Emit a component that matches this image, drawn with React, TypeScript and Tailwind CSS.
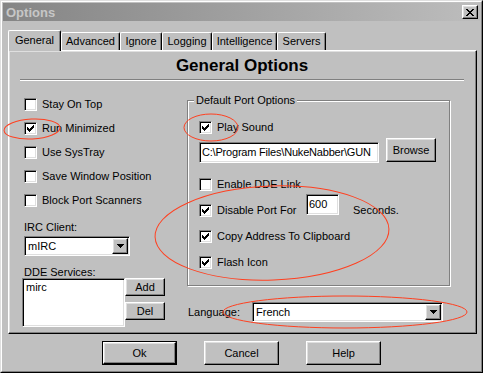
import React from "react"

const raised =
  "border border-t-white border-l-white border-r-black border-b-black shadow-[inset_-1px_-1px_0_#808080,inset_1px_1px_0_#dfdfdf] bg-[#c0c0c0]"
const sunken =
  "border border-t-[#808080] border-l-[#808080] border-r-white border-b-white shadow-[inset_1px_1px_0_#000,inset_-1px_-1px_0_#dfdfdf]"

function CheckMark() {
  return (
    <svg width="7" height="7" viewBox="0 0 7 7" className="block m-[2px]" shapeRendering="crispEdges">
      <path
        fill="#000"
        d="M6 0h1v1h-1zM5 1h2v1h-2zM0 2h1v1h-1zM4 2h3v1h-3zM0 3h2v1h-2zM3 3h3v1h-3zM0 4h5v1h-5zM1 5h3v1h-3zM2 6h1v1h-1z"
      />
    </svg>
  )
}

function Box({ checked }: { checked?: boolean }) {
  return <span className={`${sunken} block w-[13px] h-[13px] bg-white shrink-0`}>{checked && <CheckMark />}</span>
}

function CheckRow({ label, checked, h = "h-[24px]" }: { label: string; checked?: boolean; h?: string }) {
  return (
    <div className={`flex items-center gap-[5px] ${h}`}>
      <Box checked={checked} />
      <span>{label}</span>
    </div>
  )
}

function ArrowButton() {
  return (
    <span className={`${raised} mr-[1px] flex items-center justify-center w-[16px] h-[16px] shrink-0`}>
      <svg width="7" height="4" viewBox="0 0 7 4" shapeRendering="crispEdges">
        <path fill="#000" d="M0 0h7v1h-7zM1 1h5v1h-5zM2 2h3v1h-3zM3 3h1v1h-1z" />
      </svg>
    </span>
  )
}

function Combo({ value, w }: { value: string; w: string }) {
  return (
    <div className={`${sunken} bg-white flex items-center h-[20px] ${w}`}>
      <span className="flex-1 pl-[3px] whitespace-nowrap overflow-hidden">{value}</span>
      <ArrowButton />
    </div>
  )
}

function Tab({ label, w, active }: { label: string; w: string; active?: boolean }) {
  if (active) {
    return (
      <div
        className={`${w} h-[21px] -mb-px relative z-10 bg-[#c0c0c0] border-t border-l border-r border-t-white border-l-white border-r-black shadow-[inset_-1px_0_0_#808080] rounded-t-[2px] flex justify-center pt-[3px]`}
      >
        {label}
      </div>
    )
  }
  return (
    <div
      className={`${w} h-[18px] border-t border-l border-r border-t-white border-l-white border-r-black shadow-[inset_-1px_0_0_#808080] rounded-t-[2px] flex justify-center pt-[2px]`}
    >
      {label}
    </div>
  )
}

function Button({ label, def }: { label: string; def?: boolean }) {
  if (def) {
    return (
      <div className="border border-black w-[75px] h-[24px]">
        <div className={`${raised} w-full h-full flex items-center justify-center`}>{label}</div>
      </div>
    )
  }
  return <div className={`${raised} w-[75px] h-[24px] flex items-center justify-center`}>{label}</div>
}

export default function App() {
  return (
    <div className="relative w-[483px] h-[373px] overflow-hidden bg-[#c0c0c0] text-black font-['Liberation_Sans',Arial,sans-serif] text-[11px] leading-[13px]">
      <div className="w-full h-full border border-t-[#dfdfdf] border-l-[#dfdfdf] border-r-black border-b-black">
        <div className="w-full h-full border border-t-white border-l-white border-r-[#808080] border-b-[#808080] p-px flex flex-col">
          {/* title bar */}
          <div className="h-[18px] flex items-center bg-gradient-to-r from-[#858585] to-[#bdbdbd] pl-[3px] pr-[2px]">
            <span className="flex-1 font-bold text-[13px] text-[#c6c6c6]">Options</span>
            <span className={`${raised} w-[16px] h-[14px] flex items-center justify-center`}>
              <svg width="8" height="7" viewBox="0 0 8 7" shapeRendering="crispEdges">
                <path
                  fill="#000"
                  d="M0 0h2v1h-2zM6 0h2v1h-2zM1 1h2v1h-2zM5 1h2v1h-2zM2 2h4v1h-4zM3 3h2v1h-2zM2 4h4v1h-4zM1 5h2v1h-2zM5 5h2v1h-2zM0 6h2v1h-2zM6 6h2v1h-2z"
                />
              </svg>
            </span>
          </div>

          {/* tabs */}
          <div className="mt-[9px] ml-[5px] h-[20px] flex items-end">
            <Tab label="General" w="w-[53px]" active />
            <Tab label="Advanced" w="w-[59px]" />
            <Tab label="Ignore" w="w-[42px]" />
            <Tab label="Logging" w="w-[50px]" />
            <Tab label="Intelligence" w="w-[65px]" />
            <Tab label="Servers" w="w-[49px]" />
          </div>

          {/* panel */}
          <div className="ml-[5px] w-[469px] h-[284px] border border-t-white border-l-white border-r-black border-b-black shadow-[inset_-1px_-1px_0_#808080,inset_1px_1px_0_#dfdfdf] flex flex-col">
            <div className="ml-[11px] mr-[12px] h-[28px] flex items-center justify-center font-bold text-[17px]">
              General Options
            </div>
            <div className="ml-[11px] mr-[12px] h-[2px] border-t border-b border-t-[#808080] border-b-white" />

            <div className="flex pl-[15px]">
              {/* left column */}
              <div className="w-[163px] flex flex-col">
                <div className="mt-[11px]">
                  <CheckRow label="Stay On Top" />
                  <CheckRow label="Run Minimized" checked />
                  <CheckRow label="Use SysTray" />
                  <CheckRow label="Save Window Position" />
                  <CheckRow label="Block Port Scanners" />
                </div>
                <div className="mt-[9px] h-[13px]">IRC Client:</div>
                <div className="mt-[2px]">
                  <Combo value="mIRC" w="w-[106px]" />
                </div>
                <div className="mt-[10px] h-[12px] leading-[12px]">DDE Services:</div>
                <div className="flex">
                  <div className={`${sunken} bg-white -ml-[2px] w-[103px] h-[49px] pl-[3px] pt-[2px]`}>mirc</div>
                  <div className="flex flex-col">
                    <div className={`${raised} w-[40px] h-[18px] flex items-center justify-center`}>Add</div>
                    <div className={`${raised} mt-[6px] w-[40px] h-[18px] flex items-center justify-center`}>Del</div>
                  </div>
                </div>
              </div>

              {/* right column */}
              <div className="w-[263px] flex flex-col">
                <div className="mt-[19px] border border-[#808080] shadow-[inset_1px_1px_0_#fff,1px_1px_0_#fff] pb-[10px] pl-[11px] flex flex-col">
                  <div className="-mt-[7px] ml-[-5px] w-fit px-[2px] h-[13px] bg-[#c0c0c0]">Default Port Options</div>
                  <div className="mt-[8px]">
                    <CheckRow label="Play Sound" checked />
                  </div>
                  <div className="-mt-px flex items-start">
                    <div
                      className={`${sunken} mt-[4px] bg-white w-[180px] h-[21px] pl-[2px] flex items-center whitespace-nowrap overflow-hidden tracking-[-0.2px]`}
                    >
                      C:\Program Files\NukeNabber\GUN
                    </div>
                    <div className={`${raised} ml-[7px] w-[50px] h-[24px] flex items-center justify-center`}>Browse</div>
                  </div>
                  <div className="mt-[8px]">
                    <CheckRow label="Enable DDE Link" h="h-[26px]" />
                    <div className="flex items-center gap-[5px] h-[26px]">
                      <Box checked />
                      <span className="w-[84px]">Disable Port For</span>
                      <div className={`${sunken} bg-white w-[33px] h-[21px] mb-[11px] pl-[2px] flex items-center`}>600</div>
                      <span className="ml-[9px]">Seconds.</span>
                    </div>
                    <CheckRow label="Copy Address To Clipboard" checked h="h-[26px]" />
                    <CheckRow label="Flash Icon" checked h="h-[26px]" />
                  </div>
                </div>
                <div className="mt-[16px] flex items-center">
                  <span className="ml-px w-[64px]">Language:</span>
                  <Combo value="French" w="w-[191px]" />
                </div>
              </div>
            </div>
          </div>

          {/* buttons */}
          <div className="mt-[7px] flex justify-center gap-[27px]">
            <Button label="Ok" def />
            <Button label="Cancel" />
            <Button label="Help" />
          </div>
        </div>
      </div>

      {/* red annotation circles */}
      <svg className="absolute inset-0 pointer-events-none" width="483" height="373" viewBox="0 0 483 373" fill="none">
        <ellipse cx="32" cy="129" rx="28" ry="10" stroke="#ff4020" strokeWidth="1" transform="rotate(-3 32 129)" />
        <ellipse cx="211" cy="127.5" rx="27" ry="13.5" stroke="#ff4020" strokeWidth="1" />
        <ellipse cx="272" cy="233" rx="117" ry="47" stroke="#ff4020" strokeWidth="1" transform="rotate(-2 272 233)" />
        <ellipse cx="345" cy="312" rx="122" ry="16" stroke="#ff4020" strokeWidth="1" />
      </svg>
    </div>
  )
}
